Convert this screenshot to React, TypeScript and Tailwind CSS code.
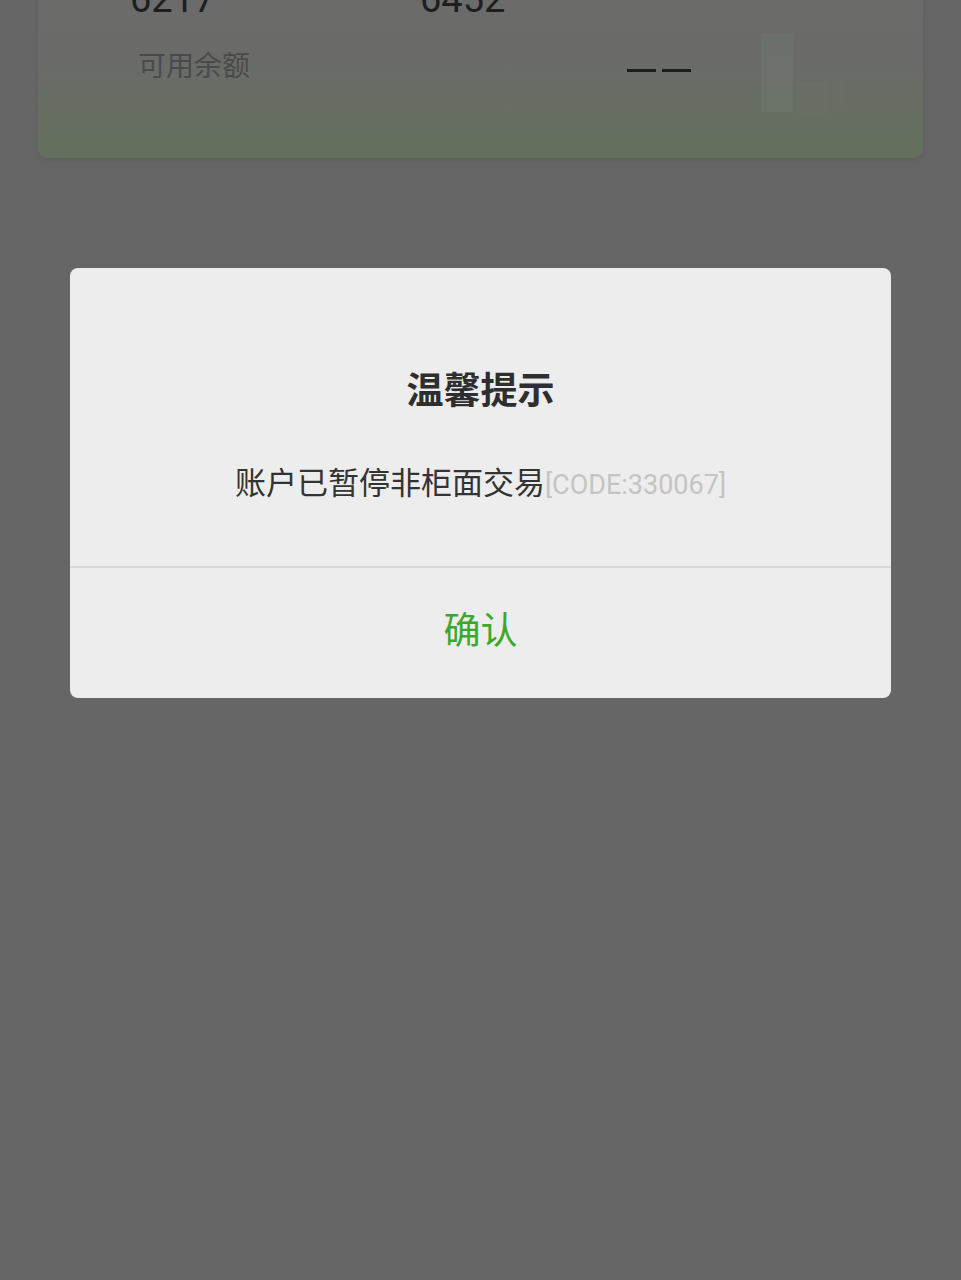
import React from "react";

export default function App() {
  return (
    <div className="relative h-[1280px] w-full overflow-hidden bg-[#666666] font-['Roboto','Noto_Sans_CJK_SC',sans-serif]">
      {/* background card (dimmed) */}
      <div className="relative mx-[38px] -mt-[40px] h-[198px] overflow-hidden rounded-b-[10px] bg-gradient-to-b from-[#6b6b6b] via-[#6a6b69] to-[#64705c] shadow-[0_2px_6px_rgba(0,0,0,0.08)]">
        <svg className="absolute right-[60px] top-[72px]" width="110" height="90" viewBox="0 0 110 90">
          <rect x="8" y="2" width="32" height="78" fill="#6f786e" opacity="0.45" />
          <rect x="44" y="50" width="30" height="32" fill="#6d746b" opacity="0.35" />
          <rect x="80" y="44" width="12" height="38" fill="#6c726a" opacity="0.3" />
        </svg>
        <div className="relative flex pl-[92px] pt-[18px] text-[38px] leading-[42px] text-[#1e1e1e]">
          <span className="w-[290px]">6217</span>
          <span>6452</span>
        </div>
        <div className="relative mt-[27px] flex items-center pl-[100px] pr-[232px]">
          <span className="text-[28px] leading-[40px] text-[#4a4a4a]">可用余额</span>
          <span className="ml-auto mt-[6px] flex gap-[6px]">
            <span className="block h-[3px] w-[29px] bg-[#1e1e1e]" />
            <span className="block h-[3px] w-[29px] bg-[#1e1e1e]" />
          </span>
        </div>
      </div>

      {/* dialog overlay */}
      <div className="absolute inset-0 flex justify-center px-[70px] pt-[268px]">
        <div className="h-[430px] w-full overflow-hidden rounded-[8px] bg-[#ededed] flex flex-col">
          <div className="flex flex-col items-center pt-[99px]">
            <div className="text-[37px] font-bold leading-[42px] text-[#2e2e2e] font-['Noto_Sans_CJK_SC',sans-serif]">温馨提示</div>
            <div className="mt-[55px] flex items-baseline leading-[34px]">
              <span className="text-[31px] text-[#333333] font-['Noto_Sans_CJK_SC',sans-serif]">账户已暂停非柜面交易</span>
              <span className="text-[27px] text-[#c4c4c4] font-['Roboto',sans-serif]">[CODE:330067]</span>
            </div>
          </div>
          <div className="mt-auto h-[2px] bg-[#d9d9d9]" />
          <div className="flex h-[130px] items-center justify-center pb-[10px]">
            <span className="text-[37px] leading-[42px] text-[#3aa82a] font-['Noto_Sans_CJK_SC',sans-serif]">确认</span>
          </div>
        </div>
      </div>
    </div>
  );
}
